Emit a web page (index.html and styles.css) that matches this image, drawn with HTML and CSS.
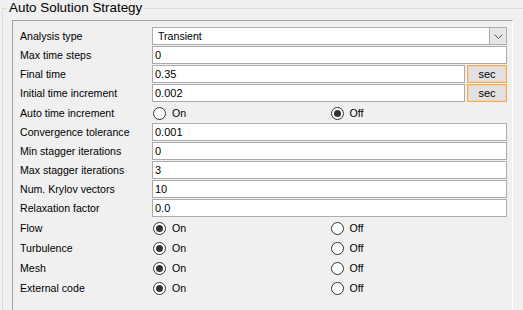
FILE: index.html
```html
<!DOCTYPE html>
<html lang="en">
<head>
  <meta charset="UTF-8" />
  <title>Auto Solution Strategy</title>
  <link rel="stylesheet" href="styles.css">
</head>
<body>

  <fieldset class="group">
    <legend>Auto Solution Strategy</legend>

    <div class="panel">
      <div class="form">
        <label>Analysis type</label>
        <div class="combo">
          <span class="combo-text">Transient</span>
          <span class="combo-btn">
            <svg width="9" height="5" viewBox="0 0 9 5"><path d="M0.5 0.5 L4.5 4.5 L8.5 0.5" fill="none" stroke="#555" stroke-width="1"/></svg>
          </span>
        </div>

        <label>Max time steps</label>
        <input class="field" type="text" value="0">

        <label>Final time</label>
        <div class="unit-row">
          <input class="field" type="text" value="0.35">
          <button class="unit">sec</button>
        </div>

        <label>Initial time increment</label>
        <div class="unit-row">
          <input class="field" type="text" value="0.002">
          <button class="unit">sec</button>
        </div>

        <label>Auto time increment</label>
        <div class="radios">
          <span class="opt"><span class="radio"></span>On</span>
          <span class="opt"><span class="radio checked"></span>Off</span>
        </div>

        <label>Convergence tolerance</label>
        <input class="field" type="text" value="0.001">

        <label>Min stagger iterations</label>
        <input class="field" type="text" value="0">

        <label>Max stagger iterations</label>
        <input class="field" type="text" value="3">

        <label>Num. Krylov vectors</label>
        <input class="field" type="text" value="10">

        <label>Relaxation factor</label>
        <input class="field" type="text" value="0.0">

        <label>Flow</label>
        <div class="radios">
          <span class="opt"><span class="radio checked"></span>On</span>
          <span class="opt"><span class="radio"></span>Off</span>
        </div>

        <label>Turbulence</label>
        <div class="radios">
          <span class="opt"><span class="radio checked"></span>On</span>
          <span class="opt"><span class="radio"></span>Off</span>
        </div>

        <label>Mesh</label>
        <div class="radios">
          <span class="opt"><span class="radio checked"></span>On</span>
          <span class="opt"><span class="radio"></span>Off</span>
        </div>

        <label>External code</label>
        <div class="radios">
          <span class="opt"><span class="radio checked"></span>On</span>
          <span class="opt"><span class="radio"></span>Off</span>
        </div>
      </div>
    </div>
  </fieldset>

</body>
</html>
```

FILE: styles.css
```css
html, body {
  margin: 0;
  height: 100%;
  overflow: hidden;
}

body {
  background: #f0f0f0;
  font-family: 'Liberation Sans', Arial, sans-serif;
  font-size: 10.6px;
  color: #000;
}

.group {
  margin: 0 0 0 2px;
  padding: 0;
  width: 540px;
  height: 330px;
  border: 1px solid #dcdcdc;
  box-sizing: border-box;
}

.group legend {
  margin-left: 4px;
  padding: 0 2px;
  font-size: 13.4px;
  line-height: 16px;
}

.panel {
  margin: 4px 0 0 9px;
  width: 501px;
  height: 300px;
  box-sizing: border-box;
  border-top: 1px solid #a0a0a0;
  border-left: 1px solid #a0a0a0;
  border-right: 1px solid #fff;
  padding: 6px 0 0 7px;
}

.form {
  display: grid;
  grid-template-columns: 132px 355px;
  grid-template-rows: 19px 19px 19px 20px 19px 19px 19px 19px 19px 20px 20px 20px 20px 20px;
  align-items: start;
}

.form label {
  line-height: 18px;
}

.field {
  box-sizing: border-box;
  width: 100%;
  height: 18px;
  margin: 0;
  padding: 0 2px;
  border: 1px solid #acacac;
  background: #fff;
  font: inherit;
  font-size: 11px;
  color: #000;
  outline: none;
}

.combo {
  display: flex;
  box-sizing: border-box;
  height: 18px;
  border: 1px solid #acacac;
  background: #fff;
}

.combo-text {
  flex: 1;
  padding-left: 5px;
  line-height: 16px;
}

.combo-btn {
  width: 16px;
  display: flex;
  align-items: center;
  justify-content: center;
  background: #e6e6e6;
  border-left: 1px solid #acacac;
}

.unit-row {
  display: flex;
  gap: 2px;
}

.unit {
  flex: none;
  box-sizing: border-box;
  width: 40px;
  height: 18px;
  margin: 0;
  padding: 0;
  border: 1px solid #f4a95c;
  box-shadow: inset 0 0 0 1px #fad2a6;
  background: #e1e1e1;
  font: inherit;
  font-size: 11px;
  color: #000;
}

.radios {
  display: flex;
  height: 18px;
  align-items: center;
}

.opt {
  display: flex;
  align-items: center;
  width: 178px;
  padding-left: 1px;
}

.radio {
  box-sizing: border-box;
  width: 13px;
  height: 13px;
  margin-right: 6px;
  border: 1px solid #333;
  border-radius: 50%;
  background: #fff;
  display: flex;
  align-items: center;
  justify-content: center;
}

.radio.checked::after {
  content: "";
  width: 7px;
  height: 7px;
  border-radius: 50%;
  background: #333;
}
```
